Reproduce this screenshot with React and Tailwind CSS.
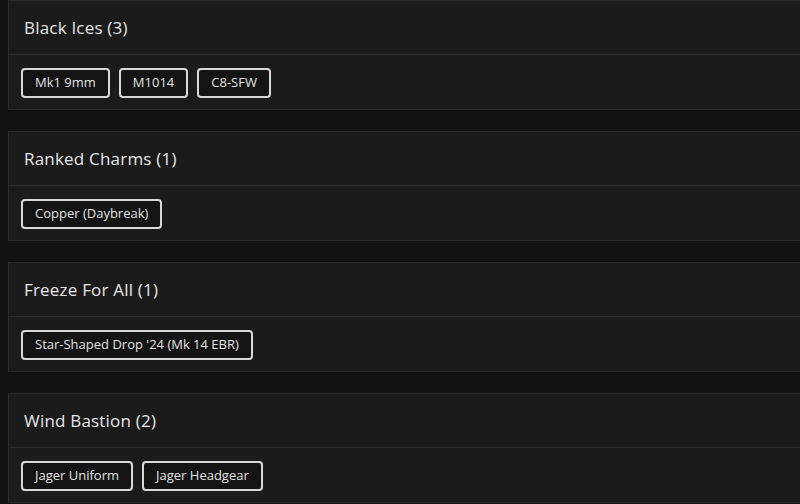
import React from "react";

const groups = [
  { title: "Black Ices (3)", items: ["Mk1 9mm", "M1014", "C8-SFW"] },
  { title: "Ranked Charms (1)", items: ["Copper (Daybreak)"] },
  { title: "Freeze For All (1)", items: ["Star-Shaped Drop '24 (Mk 14 EBR)"] },
  { title: "Wind Bastion (2)", items: ["Jager Uniform", "Jager Headgear"] },
];

export default function App() {
  return (
    <div
      className="h-[504px] w-[800px] overflow-hidden bg-[#121212] pl-2 flex flex-col gap-[21px]"
      style={{ fontFamily: '"Open Sans", "Liberation Sans", sans-serif' }}
    >
      {groups.map((g) => (
        <div key={g.title} className="w-[820px] h-[110px] shrink-0 border border-[#2a2a2a] bg-[#1b1b1b] flex flex-col">
          <div className="h-[54px] shrink-0 flex items-center pl-[15px] border-b border-[#2c2c2c]">
            <span className="text-[17px] font-medium text-[#e6e6e6] tracking-[0.2px]">{g.title}</span>
          </div>
          <div className="flex-1 flex items-start pt-[13px] gap-[9px] pl-[12px]">
            {g.items.map((it) => (
              <span
                key={it}
                className="h-[30px] flex items-center px-[12px] border-2 border-[#d8d8d8] rounded-[4px] bg-[#141414] text-[13px] text-[#e2e2e2]"
              >
                {it}
              </span>
            ))}
          </div>
        </div>
      ))}
    </div>
  );
}
